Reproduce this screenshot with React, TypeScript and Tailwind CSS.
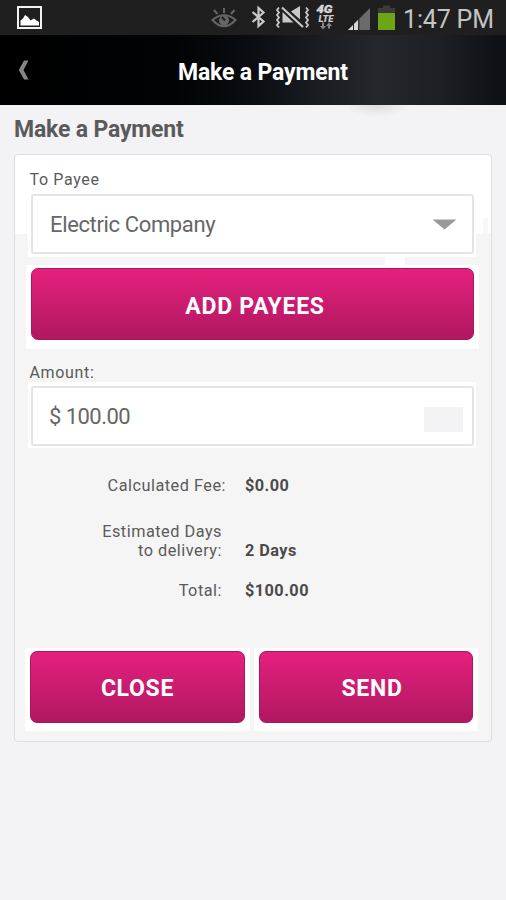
import React from "react";

function PinkButton({ label, className }: { label: string; className: string }) {
  return (
    <button
      className={`flex items-center justify-center rounded-[7px] border border-[#ad155c] bg-linear-to-b from-[#e5207f] to-[#b01860] text-[23px] font-bold tracking-[0.7px] text-white ${className}`}
    >
      {label}
    </button>
  );
}

function StatusIcons() {
  return (
    <svg width="506" height="35" viewBox="0 0 506 35" className="block">
      <rect x="18" y="7" width="23" height="21" fill="none" stroke="#f2f2f2" strokeWidth="2" />
      <path d="M20.500 25.500v-5l2.500-2 2-3.500 3 2 2.500 3.500 3.500-2 2.500 2 2.500 1.500v3.500z" fill="#fff" />
      <g fill="none" stroke="#666" strokeWidth="2">
        <path d="M212.500 20q11.500-9.500 23 0q-11.500 12.500-23 0z" />
        <path d="M224 8v5M214 10l3.500 4M234.500 10l-3.500 4" />
      </g>
      <circle cx="224" cy="20.500" r="5" fill="#666" />
      <path d="M222 17l3 3.500" stroke="#1f1f1f" strokeWidth="2" />
      <path d="M252.500 12l11 9.500-5 4.500V8l5 4.500-11 9.500" fill="none" stroke="#c8c8c8" strokeWidth="2.200" />
      <g fill="none" stroke="#c8c8c8">
        <path d="M279 7.500l-2 2.500 2 2.500-2 2.500 2 2.500-2 2.500 2 2.500-2 2.500 2 2.500M306 7.500l2 2.500-2 2.500 2 2.500-2 2.500 2 2.500-2 2.500 2 2.500-2 2.500" strokeWidth="1.800" />
        <path d="M282 7.500l21 19.500" strokeWidth="2.200" />
      </g>
      <path d="M282.500 12v10.500h11zM291 11.500l9-5.500v13.500z" fill="#c8c8c8" />
      <text x="316.500" y="13" fontSize="10.500" fontWeight="900" fontStyle="italic" fill="#d6d6d6" stroke="#d6d6d6" strokeWidth="0.300" fontFamily="Roboto, sans-serif" textLength="16" lengthAdjust="spacingAndGlyphs">4G</text>
      <text x="318.500" y="21.500" fontSize="8.500" fontWeight="900" fontStyle="italic" fill="#cecece" fontFamily="Roboto, sans-serif" textLength="15" lengthAdjust="spacingAndGlyphs">LTE</text>
      <path d="M322 22.500h2v3.500h2l-3 3.500-3-3.500h2zM328 28.500h2V26h2l-3-3.500-3 3.500h2z" fill="#858585" />
      <path d="M348 30L370 8v22z" fill="#6b6b6b" />
      <path d="M348 30l5-5v5zM354 24l4-4v10h-4z" fill="#d8d8d8" />
      <path d="M353.500 24v6M358.800 19v11" stroke="#1f1f1f" />
      <path d="M378 30V8h5V5.500h7V8h5v22z" fill="#3b3b3b" />
      <rect x="378" y="13" width="17" height="17" fill="#6da516" />
      <text x="403" y="27.500" fontSize="25" fill="#c4c4c4" fontFamily="Roboto, sans-serif" textLength="91">1:47 PM</text>
    </svg>
  );
}

function Row({ label, value, className, labelClass }: { label: React.ReactNode; value: string; className: string; labelClass: string }) {
  return (
    <div className={`flex items-end ${className}`}>
      <div className={`text-right tracking-[0.5px] ${labelClass}`}>{label}</div>
      <div className="pl-[23px] font-bold tracking-[0.45px] text-[#4a4a4a]">{value}</div>
    </div>
  );
}

export default function App() {
  return (
    <div className="h-[900px] w-[506px] overflow-hidden bg-[#f3f3f5] font-[Roboto,sans-serif] text-[#5a5a5a]">
      <div className="h-[35px] bg-[#1f1f1f]">
        <StatusIcons />
      </div>
      <header className="flex h-[70px] items-center bg-[linear-gradient(90deg,#000_0%,#010305_35%,#0a0d12_50%,#1b1f24_65%,#24282d_75%,#1c2025_87%,#0e1216_98%)] pl-[18px]">
        <svg width="12" height="22" viewBox="0 0 12 22">
          <path d="M6 1.500H10.500L5.500 11l5 9.500H6L.8 11z" fill="#858585" />
        </svg>
        <h1 className="ml-[148px] mt-[5px] whitespace-nowrap text-[23px] font-bold leading-[28px] tracking-[-0.16px] text-white">Make a Payment</h1>
      </header>
      <div className="relative h-[49px] pl-[14px] pt-[11px]">
        <div className="absolute left-[345px] top-0 h-[12px] w-[64px] bg-[radial-gradient(ellipse_at_top,#dcdcde,#f3f3f500_70%)]" />
        <h2 className="text-[23px] font-bold leading-[28px] tracking-[-0.18px]">Make a Payment</h2>
      </div>
      <main className="relative ml-[14px] flex h-[588px] w-[478px] flex-col rounded-[4px] border border-[#dedee0] bg-[linear-gradient(#fff_79px,#f5f5f5_79px)]">
        <div className="absolute right-[3px] top-[63px] h-[16px] w-[5px] bg-[#f8f8f8]" />
        <div className="absolute left-[370px] top-[102px] h-[9px] w-[20px] bg-white" />
        <label className="ml-[14.500px] mt-[15px] h-[20px] text-[16px] leading-[20px] tracking-[0.65px]">To Payee</label>
        <div className="ml-[13px] mt-[4px] h-[63px] w-[448px] bg-white pl-[3px]">
          <div className="flex h-[60px] w-[443px] items-center justify-between rounded-[3px] border-2 border-[#e4e4e4] bg-white pl-[17px] pr-[15px] text-[22px] tracking-[-0.36px] text-[#666]">
            <span>Electric Company</span>
            <svg width="25" height="11" viewBox="0 0 25 11"><path d="M.5.500h24L12.500 10.500z" fill="#999" /></svg>
          </div>
        </div>
        <div className="ml-[11px] mt-[8px] h-[84px] w-[453px] bg-white pl-[5px] pt-[3px]">
          <PinkButton label="ADD PAYEES" className="h-[72px] w-[443px] pl-[5px] pt-[6px]" />
        </div>
        <label className="ml-[14.500px] mt-[14px] h-[20px] text-[16px] leading-[20px] tracking-[0.65px]">Amount:</label>
        <div className="-mt-px ml-[13px] h-[66px] w-[448px] bg-white pl-[3px] pt-[4px]">
          <div className="flex h-[60px] w-[443px] items-center justify-between rounded-[3px] border-2 border-[#e4e4e4] bg-white pl-[16px] pr-[9px] text-[22px] tracking-[-0.55px] text-[#666]">
            <span>$ 100.00</span>
            <span className="mt-[7px] h-[25px] w-[39px] bg-[#f3f3f6]" />
          </div>
        </div>
        <div className="mt-[28px] h-[172px] text-[16.300px] leading-[19px]">
          <Row label="Calculated Fee:" value="$0.00" className="" labelClass="w-[211px] mr-[-4px]" />
          <Row label={<>Estimated Days<br />to delivery:</>} value="2 Days" className="mt-[27px]" labelClass="w-[207px]" />
          <Row label="Total:" value="$100.00" className="mt-[21px]" labelClass="w-[207px]" />
        </div>
        <div className="ml-[10px] flex gap-[4px]">
          <div className="h-[83px] w-[225px] bg-white pl-[5px] pt-[3px]">
            <PinkButton label="CLOSE" className="h-[72px] w-[215px] pt-[5px]" />
          </div>
          <div className="h-[83px] w-[224px] bg-white pl-[5px] pt-[3px]">
            <PinkButton label="SEND" className="h-[72px] w-[214px] pl-[12px] pt-[5px]" />
          </div>
        </div>
      </main>
    </div>
  );
}
